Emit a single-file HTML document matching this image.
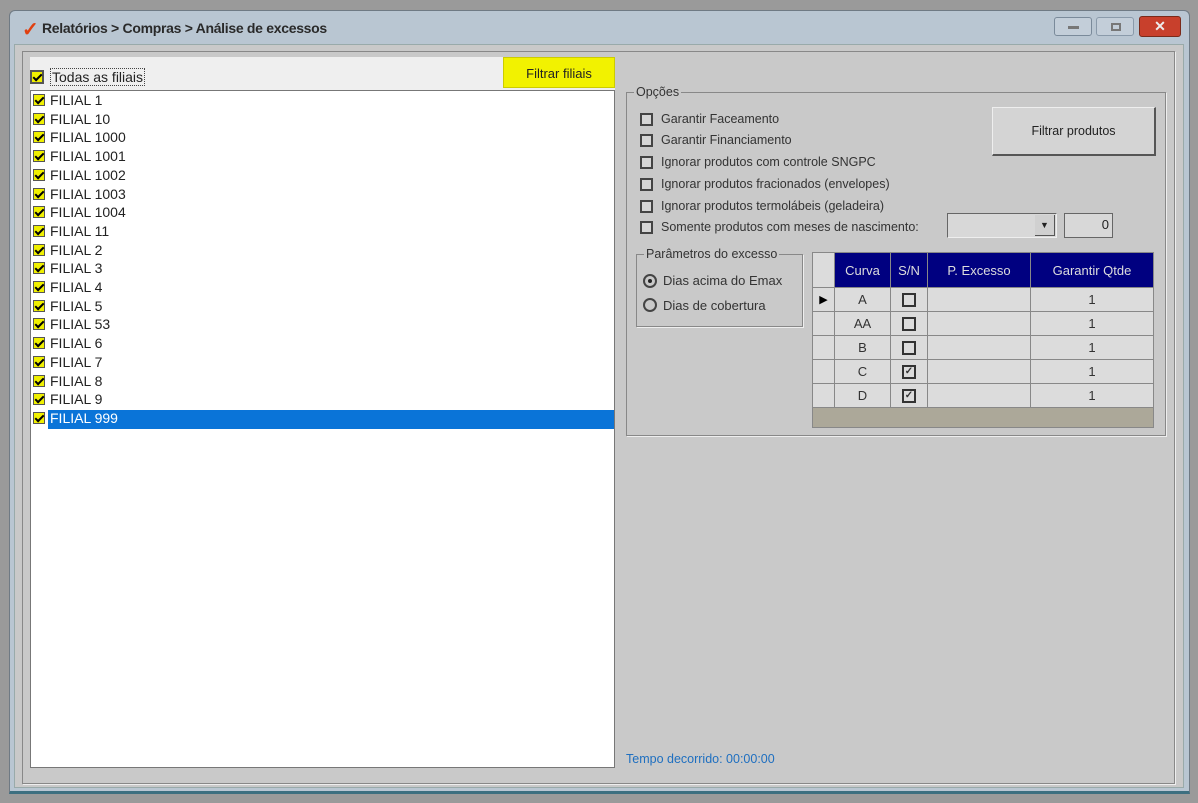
<!DOCTYPE html><html><head><meta charset="utf-8"><style>
*{box-sizing:border-box;margin:0;padding:0}
body{width:1198px;height:803px;background:#9a9a9a;font-family:"Liberation Sans",sans-serif;font-size:13px;color:#222;position:relative;overflow:hidden}
.a{position:absolute}
.win{left:9px;top:10px;width:1181px;height:784px;background:#b9c6d2;border:1px solid #6f7a84;border-bottom:3px solid #3d6f80;border-radius:6px 6px 0 0}
.client{left:14px;top:44px;width:1170px;height:744px;background:#c9c9c9;border:1px solid #9aa}
.inner{left:22px;top:51px;width:1153px;height:733px;border:1px solid #888;box-shadow:1px 1px 0 #eee}
.cb{position:absolute;width:12px;height:12px;background:#f0f000;border:1px solid #555}
.cb:after{content:"";position:absolute;left:3px;top:0px;width:3px;height:7px;border:solid #000;border-width:0 2px 2px 0;transform:rotate(45deg)}
.row{position:absolute;left:48px;height:19px;line-height:19px;font-size:14px}
.ck{position:absolute;width:13px;height:13px;border:2px solid #444;background:#d6d6d6}
.lbl{position:absolute;font-size:12.5px;color:#333}
table{border-collapse:collapse;position:absolute;left:812px;top:252px;font-size:13px}
td,th{border:1px solid #888;text-align:center;height:24px;background:#dcdcdc;color:#333}
th{background:#000080;color:#ddd;font-weight:normal;height:35px}
.sq{display:inline-block;width:14px;height:14px;border:2px solid #333;font-size:10px;line-height:10px;vertical-align:middle;font-weight:bold}
</style></head><body>
<div class="a win"></div>
<div class="a" style="left:22px;top:17px;color:#e04010;font-size:20px;font-weight:bold">✓</div>
<div class="a" style="left:42px;top:20px;font-size:14px;color:#2a2a2a;font-weight:bold;letter-spacing:-0.3px">Relatórios &gt; Compras &gt; Análise de excessos</div>
<div class="a" style="left:1054px;top:17px;width:38px;height:19px;border:1px solid #7a8a9a;border-radius:3px;background:#c3ced9"><div class="a" style="left:13px;top:8px;width:11px;height:3px;background:#777"></div></div>
<div class="a" style="left:1096px;top:17px;width:38px;height:19px;border:1px solid #8a9aaa;border-radius:3px;background:#c3ced9"><div class="a" style="left:14px;top:5px;width:10px;height:8px;border:2px solid #777"></div></div>
<div class="a" style="left:1139px;top:16px;width:42px;height:21px;border:1px solid #7a2a1a;border-radius:3px;background:#c8402c;color:#eee;text-align:center;font-weight:bold;font-size:14px;line-height:19px">✕</div>
<div class="a client"></div>
<div class="a inner"></div>
<div class="a" style="left:30px;top:57px;width:585px;height:33px;background:#efefef"></div>
<div class="a" style="left:503px;top:57px;width:112px;height:31px;background:#f2f200;border:1px solid #cc0;text-align:center;line-height:31px;font-size:13px">Filtrar filiais</div>
<div class="cb" style="left:30px;top:70px;width:14px;height:14px;border:2px solid #555"></div>
<div class="a" style="left:50px;top:68px;font-size:14px;border:1px dotted #444;padding:0 1px">Todas as filiais</div>
<div class="a" style="left:30px;top:90px;width:585px;height:678px;background:#fff;border:1px solid #777"></div>
<div class="a" style="left:48px;top:410px;width:566px;height:19px;background:#0a74d8"></div>
<div id="rows"></div>
<script>
var n=["1","10","1000","1001","1002","1003","1004","11","2","3","4","5","53","6","7","8","9","999"],h="";
n.forEach(function(x,i){var y=91+i*18.7;h+='<div class="cb" style="left:33px;top:'+(y+3)+'px"></div><div class="row" style="top:'+y+'px;left:50px;'+(i==17?'color:#fff':'')+'">FILIAL '+x+'</div>';});
document.getElementById('rows').innerHTML=h;
</script>
<div class="a" style="left:626px;top:92px;width:540px;height:344px;border:1px solid #888;box-shadow:1px 1px 0 #eee"></div>
<div class="a" style="left:634px;top:85px;background:#c9c9c9;padding:0 2px;font-size:12.5px;color:#333">Opções</div>
<div class="ck" style="left:640px;top:113px"></div><div class="lbl" style="left:661px;top:112px">Garantir Faceamento</div>
<div class="ck" style="left:640px;top:134px"></div><div class="lbl" style="left:661px;top:133px">Garantir Financiamento</div>
<div class="ck" style="left:640px;top:156px"></div><div class="lbl" style="left:661px;top:155px">Ignorar produtos com controle SNGPC</div>
<div class="ck" style="left:640px;top:178px"></div><div class="lbl" style="left:661px;top:177px">Ignorar produtos fracionados (envelopes)</div>
<div class="ck" style="left:640px;top:200px"></div><div class="lbl" style="left:661px;top:199px">Ignorar produtos termolábeis (geladeira)</div>
<div class="ck" style="left:640px;top:221px"></div><div class="lbl" style="left:661px;top:220px">Somente produtos com meses de nascimento:</div>
<div class="a" style="left:992px;top:107px;width:164px;height:49px;background:#d4d4d4;border:1px solid #eee;border-right:2px solid #555;border-bottom:2px solid #555;text-align:center;line-height:46px;font-size:12.5px">Filtrar produtos</div>
<div class="a" style="left:947px;top:213px;width:110px;height:25px;background:#d8d8d8;border:1px solid #666;border-right-color:#eee;border-bottom-color:#eee"><div class="a" style="right:1px;top:1px;width:20px;height:21px;background:#d0d0d0;border-right:1px solid #555;border-bottom:1px solid #555;font-size:9px;text-align:center;line-height:21px">▼</div></div>
<div class="a" style="left:1064px;top:213px;width:49px;height:25px;background:#d8d8d8;border:1px solid #666;text-align:right;padding-right:3px;line-height:22px;font-size:13px">0</div>
<div class="a" style="left:636px;top:254px;width:167px;height:73px;border:1px solid #888;box-shadow:1px 1px 0 #eee"></div>
<div class="a" style="left:644px;top:247px;background:#c9c9c9;padding:0 2px;font-size:12.5px;color:#333">Parâmetros do excesso</div>
<div class="a" style="left:643px;top:274px;width:14px;height:14px;border:2px solid #444;border-radius:50%"><div class="a" style="left:3px;top:3px;width:4px;height:4px;background:#222;border-radius:50%"></div></div>
<div class="lbl" style="left:663px;top:273px;font-size:13px">Dias acima do Emax</div>
<div class="a" style="left:643px;top:298px;width:14px;height:14px;border:2px solid #444;border-radius:50%"></div>
<div class="lbl" style="left:663px;top:298px;font-size:13px">Dias de cobertura</div>
<div class="a" style="left:812px;top:252px;width:342px;height:176px;background:#aca899;border:1px solid #888"></div>
<table>
<tr><td style="width:22px;height:35px;background:#dcdcdc"></td><th style="width:56px">Curva</th><th style="width:37px">S/N</th><th style="width:103px">P. Excesso</th><th style="width:123px">Garantir Qtde</th></tr>
<tr><td style="font-size:11px;color:#000">▶</td><td>A</td><td><span class="sq"></span></td><td></td><td>1</td></tr>
<tr><td></td><td>AA</td><td><span class="sq"></span></td><td></td><td>1</td></tr>
<tr><td></td><td>B</td><td><span class="sq"></span></td><td></td><td>1</td></tr>
<tr><td></td><td>C</td><td><span class="sq">✓</span></td><td></td><td>1</td></tr>
<tr><td></td><td>D</td><td><span class="sq">✓</span></td><td></td><td>1</td></tr>
</table>
<div class="a" style="left:626px;top:752px;color:#1e6fc0;font-size:12.5px">Tempo decorrido: 00:00:00</div>
</body></html>
